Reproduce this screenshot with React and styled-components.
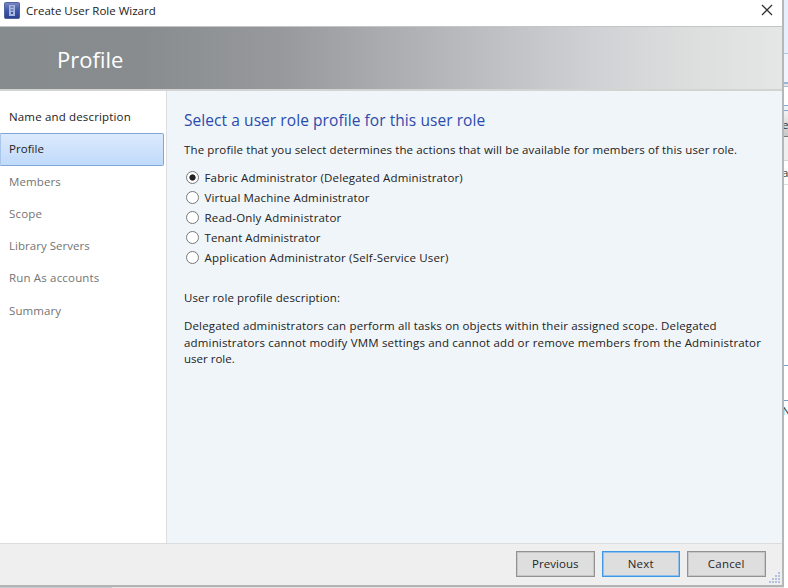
import React, { useState } from "react";
import styled, { createGlobalStyle } from "styled-components";

const GlobalStyle = createGlobalStyle`
  * { box-sizing: border-box; }
  body { margin: 0; overflow: hidden; background: #fff; }
`;

const Desktop = styled.div`
  display: flex;
  width: 788px;
  height: 588px;
  overflow: hidden;
  font-family: "Open Sans", "Noto Sans", sans-serif;
  font-size: 11.5px;
  color: #222;
`;

const WindowColumn = styled.div`
  display: flex;
  flex-direction: column;
  width: 784px;
  flex: none;
`;

const Window = styled.div`
  display: flex;
  flex-direction: column;
  height: 587px;
  border-right: 2px solid #b5b7b9;
  border-bottom: 2px solid #b4b4b4;
`;

const BelowWindow = styled.div`
  height: 1px;
  background: linear-gradient(90deg, #c3cad0 0 112px, #e4e4e4 112px);
`;

const TitleBar = styled.header`
  display: flex;
  align-items: center;
  height: 26px;
  padding: 0 9px 6px 4px;
  background: #fff;
`;

const TitleText = styled.span`
  margin-left: 6px;
  padding-top: 1px;
  line-height: 18px;
  color: #1c1c1c;
`;

const CloseButton = styled.button`
  display: flex;
  margin-left: auto;
  padding: 0;
  border: 0;
  background: none;
`;

const Banner = styled.div`
  height: 65px;
  padding-left: 57px;
  border-top: 1px solid #c4c5c6;
  border-bottom: 2px solid #d3d3d2;
  background: linear-gradient(90deg, #868b8e 0, #888c8f 18%, #97999d 36%, #bcbec2 62%, #cfd1d4 76%, #dcdede 88%, #e5e6e6 100%);
  color: #fff;
  font-size: 22px;
  line-height: 65px;
`;

const Body = styled.div`
  display: flex;
  height: 452px;
`;

const Nav = styled.nav`
  width: 167px;
  flex: none;
  padding-top: 10px;
  border-right: 1px solid #dcdfe1;
  background: #fff;
`;

const NavItem = styled.div`
  height: 32.3px;
  padding-left: 9px;
  line-height: 31px;
  white-space: nowrap;
  letter-spacing: ${(p) => p.$spacing}px;
  color: ${(p) => (p.$state === "pending" ? "#747474" : "#222")};
  ${(p) =>
    p.$state === "current" &&
    `
    width: 164px;
    padding-left: 8px;
    line-height: 29px;
    border: 1px solid #7fa6d6;
    border-left-color: #a9c6ea;
    border-radius: 0 2px 2px 0;
    background: linear-gradient(#dceafc, #c0dafb);
  `}
`;

const Content = styled.main`
  flex: 1;
  padding: 17px 0 0 17px;
  background: #f0f5f9;
`;

const Heading = styled.h1`
  margin: 0 0 8px;
  font-size: 15.5px;
  font-weight: 400;
  line-height: 24px;
  letter-spacing: ${(p) => p.$spacing}px;
  color: #2a4bac;
`;

const Line = styled.p`
  margin: 0;
  height: 16.7px;
  line-height: 20px;
  white-space: nowrap;
  letter-spacing: ${(p) => p.$spacing}px;
`;

const RadioList = styled.div`
  display: flex;
  flex-direction: column;
  margin: 11.4px 0 21px;
`;

const RadioRow = styled.label`
  display: flex;
  align-items: center;
  height: 19.8px;
  padding-left: 1.5px;
  letter-spacing: ${(p) => p.$spacing}px;
  white-space: nowrap;
`;

const RadioInput = styled.input`
  appearance: none;
  width: 13px;
  height: 13px;
  margin: 0 6px 0 0;
  border: 1px solid #777;
  border-radius: 50%;
  background: #fff;
  &:checked {
    background: radial-gradient(circle, #222 0 2.7px, #fff 3.5px);
  }
`;

const Description = styled.div`
  margin-top: 11.3px;
`;

const Footer = styled.footer`
  display: flex;
  flex: 1;
  position: relative;
  justify-content: flex-end;
  gap: 7px;
  padding: 7px 16.5px 0 0;
  border-top: 1px solid #dcdcdc;
  background: #efefef;
`;

const PushButton = styled.button`
  width: 78.5px;
  height: 26px;
  padding: 0 0 1px;
  border: 1px solid ${(p) => (p.$primary ? "#3f98e4" : "#929292")};
  box-shadow: inset 0 0 0 1px ${(p) => (p.$primary ? "#8fc1ec" : "#c6c6c6")};
  background: #dedede;
  color: #262626;
  font: inherit;
  letter-spacing: ${(p) => p.$spacing}px;
`;

const Grip = styled.svg`
  position: absolute;
  right: 1px;
  bottom: 1px;
`;

const Behind = styled.aside`
  display: flex;
  flex-direction: column;
  width: 4px;
  flex: none;
  overflow: hidden;
`;

const Slice = styled.div`
  height: ${(p) => p.$h}px;
  flex: none;
  overflow: hidden;
  background: ${(p) => p.$bg};
  font-size: 11.5px;
  line-height: ${(p) => p.$h}px;
  text-indent: -2px;
  color: #333;
`;

const navItems = [
  ["Name and description", "done", 0.16],
  ["Profile", "current", 0.05],
  ["Members", "pending", 0.12],
  ["Scope", "pending", 0.2],
  ["Library Servers", "pending", 0.03],
  ["Run As accounts", "pending", 0.17],
  ["Summary", "pending", 0.08],
];

const profiles = [
  ["Fabric Administrator (Delegated Administrator)", 0.16],
  ["Virtual Machine Administrator", 0.15],
  ["Read-Only Administrator", 0.19],
  ["Tenant Administrator", 0.07],
  ["Application Administrator (Self-Service User)", 0.17],
];

const descriptionLines = [
  ["Delegated administrators can perform all tasks on objects within their assigned scope. Delegated", 0.15],
  ["administrators cannot modify VMM settings and cannot add or remove members from the Administrator", 0.165],
  ["user role.", 0],
];

const slices = [
  [53, "#e8effc"], [1, "#b4c6dc"], [28, "#f0f4fd"], [2, "#9db5d4"], [2, "#e4e6e8"],
  [1, "#a9bbd0"], [18, "#fff"], [1, "#86a8cc"], [4, "#eef3f8"], [1, "#86a8cc"],
  [1, "#eee"], [1, "#f0f0f0"], [23, "linear-gradient(#f0f0f0, #c6c6c6)", "e"], [1, "#777"],
  [23, "#f0eff0"], [1, "#d4d4d4"], [23, "#fff", "a"], [1, "#ddd"], [180, "#fff"],
  [1, "#7d9cc0"], [34, "#fff"], [1, "#7d9cc0"], [19, "#fff", "N"], [169, "#fff"],
];

function ServerIcon() {
  return (
    <svg width="16" height="17" viewBox="0 0 16 17">
      <defs>
        <linearGradient id="tile" x1="0" y1="0" x2="0" y2="1">
          <stop offset="0" stopColor="#7888c2" />
          <stop offset="0.5" stopColor="#4058a8" />
          <stop offset="1" stopColor="#28408c" />
        </linearGradient>
      </defs>
      <rect x="0.5" y="0.5" width="15" height="16" rx="1" fill="url(#tile)" stroke="#5064a4" />
      <rect x="5" y="3" width="6" height="11" fill="#a8b8e4" />
      <path d="M6.5 5h3M6.5 8h3" stroke="#405090" />
      <rect x="7" y="10" width="2" height="2" fill="#405090" />
    </svg>
  );
}

export default function App() {
  const [selected, setSelected] = useState(0);
  return (
    <Desktop>
      <GlobalStyle />
      <WindowColumn>
        <Window>
          <TitleBar>
            <ServerIcon />
            <TitleText>Create User Role Wizard</TitleText>
            <CloseButton aria-label="Close">
              <svg width="12" height="12" viewBox="0 0 12 12">
                <path d="M1 1l10 10M11 1L1 11" stroke="#333" strokeWidth="1.3" />
              </svg>
            </CloseButton>
          </TitleBar>
          <Banner>Profile</Banner>
          <Body>
            <Nav>
              {navItems.map(([label, state, spacing]) => (
                <NavItem key={label} $state={state} $spacing={spacing}>{label}</NavItem>
              ))}
            </Nav>
            <Content>
              <Heading $spacing={0.07}>Select a user role profile for this user role</Heading>
              <Line $spacing={0.13}>
                The profile that you select determines the actions that will be available for members of this user role.
              </Line>
              <RadioList>
                {profiles.map(([label, spacing], i) => (
                  <RadioRow key={label} $spacing={spacing}>
                    <RadioInput type="radio" name="profile" checked={selected === i} onChange={() => setSelected(i)} />
                    {label}
                  </RadioRow>
                ))}
              </RadioList>
              <Line $spacing={0.11}>User role profile description:</Line>
              <Description>
                {descriptionLines.map(([text, spacing]) => (
                  <Line key={text} $spacing={spacing}>{text}</Line>
                ))}
              </Description>
            </Content>
          </Body>
          <Footer>
            <PushButton $spacing={0.05}>Previous</PushButton>
            <PushButton $primary $spacing={0.2}>Next</PushButton>
            <PushButton $spacing={0.2}>Cancel</PushButton>
            <Grip width="12" height="12" viewBox="0 0 12 12" fill="#b4c0dc">
              <path d="M9 0h2v2h-2zM6 3h2v2h-2zM9 3h2v2h-2zM3 6h2v2h-2zM6 6h2v2h-2zM9 6h2v2h-2zM0 9h2v2h-2zM3 9h2v2h-2zM6 9h2v2h-2zM9 9h2v2h-2z" />
            </Grip>
          </Footer>
        </Window>
        <BelowWindow />
      </WindowColumn>
      <Behind>
        {slices.map(([h, bg, text], i) => (
          <Slice key={i} $h={h} $bg={bg}>{text}</Slice>
        ))}
      </Behind>
    </Desktop>
  );
}
